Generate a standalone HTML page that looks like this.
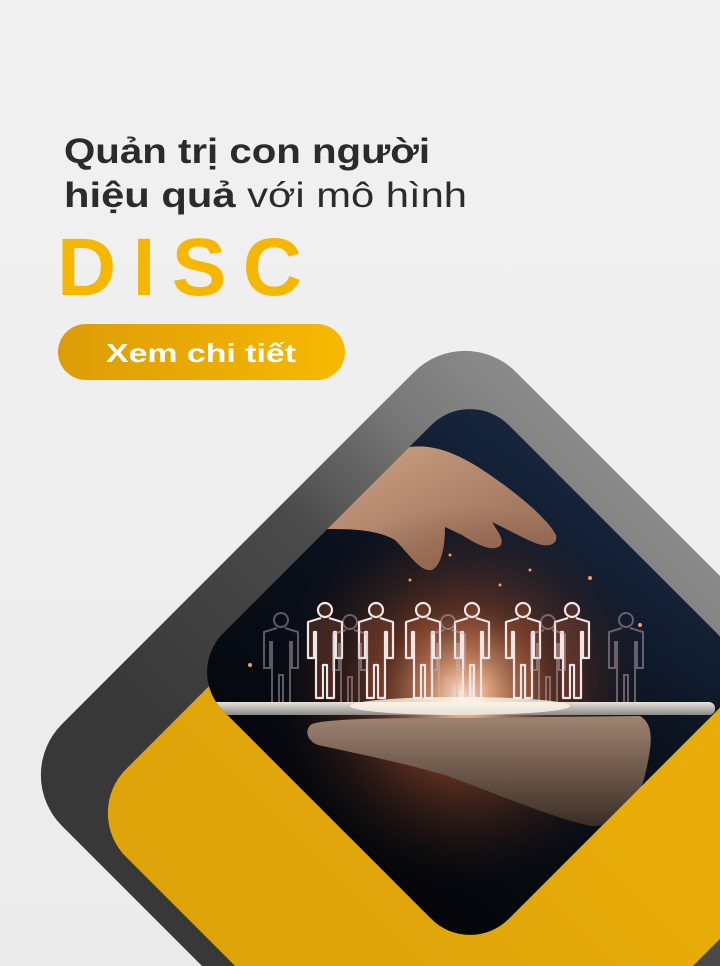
<!DOCTYPE html>
<html><head><meta charset="utf-8">
<style>
html,body{margin:0;padding:0;width:720px;height:966px;overflow:hidden;background:#efefef}
svg{display:block;overflow:hidden}
</style></head>
<body>
<svg width="720" height="966" viewBox="0 0 720 966" xmlns="http://www.w3.org/2000/svg">
<defs>
  <linearGradient id="bg" x1="0" y1="0" x2="0" y2="1">
    <stop offset="0" stop-color="#f1f1f1"/><stop offset="1" stop-color="#ebebeb"/>
  </linearGradient>
  <linearGradient id="gray" gradientUnits="userSpaceOnUse" x1="0" y1="340" x2="0" y2="966">
    <stop offset="0" stop-color="#9c9c9c"/><stop offset="0.35" stop-color="#7a7a7a"/><stop offset="0.6" stop-color="#4a4a4a"/><stop offset="1" stop-color="#383838"/>
  </linearGradient>
  <linearGradient id="yel" gradientUnits="userSpaceOnUse" x1="0" y1="700" x2="0" y2="966">
    <stop offset="0" stop-color="#e8ad08"/><stop offset="1" stop-color="#dea40a"/>
  </linearGradient>
  <linearGradient id="btn" x1="0" y1="0" x2="1" y2="0">
    <stop offset="0" stop-color="#dc9c08"/><stop offset="1" stop-color="#f7b900"/>
  </linearGradient>
  <linearGradient id="photo" gradientUnits="userSpaceOnUse" x1="600" y1="420" x2="300" y2="850">
    <stop offset="0" stop-color="#1a2c48"/><stop offset="0.45" stop-color="#0b121e"/><stop offset="1" stop-color="#030508"/>
  </linearGradient>
  <radialGradient id="glow" gradientUnits="userSpaceOnUse" cx="465" cy="695" r="190">
    <stop offset="0" stop-color="#fff4e8" stop-opacity="1"/>
    <stop offset="0.12" stop-color="#f6b58a" stop-opacity="0.9"/>
    <stop offset="0.45" stop-color="#b5532a" stop-opacity="0.45"/>
    <stop offset="1" stop-color="#3a1a10" stop-opacity="0"/>
  </radialGradient>
  <linearGradient id="skin" x1="0" y1="0" x2="1" y2="1">
    <stop offset="0" stop-color="#d2a687"/><stop offset="1" stop-color="#8e6550"/>
  </linearGradient>
  <linearGradient id="skin2" gradientUnits="userSpaceOnUse" x1="0" y1="715" x2="0" y2="825">
    <stop offset="0" stop-color="#a08472"/><stop offset="1" stop-color="#3c2e26"/>
  </linearGradient>
  <linearGradient id="tab" x1="0" y1="0" x2="0" y2="1">
    <stop offset="0" stop-color="#e8e2da"/><stop offset="1" stop-color="#8a8a88"/>
  </linearGradient>
  <clipPath id="pc"><rect x="268" y="470" width="404" height="404" rx="55" transform="rotate(45 470 672)"/></clipPath>
</defs>
<rect width="720" height="966" fill="url(#bg)"/>

<rect x="144" y="454" width="642" height="642" rx="72" transform="rotate(45 465 775)" fill="url(#gray)"/>
<rect x="194" y="543" width="540" height="540" rx="62" transform="rotate(45 464 813)" fill="url(#yel)"/>

<g clip-path="url(#pc)">
  <rect x="150" y="370" width="600" height="600" fill="url(#photo)"/>
  <path d="M300 505 C330 480 370 455 410 447 C440 443 470 460 500 482 C525 500 548 520 556 535 C558 545 548 548 535 543 C520 537 505 528 492 522 C498 532 505 540 500 546 C492 552 478 545 462 535 L445 527 C445 545 442 565 432 570 C420 572 410 555 395 540 C375 528 340 528 300 530 Z" fill="url(#skin)"/>
  <rect x="150" y="370" width="600" height="600" fill="url(#glow)"/>
  <g fill="#c0603a" fill-opacity="0.25" stroke="#f0e6e6" stroke-width="2.2" stroke-linejoin="round">
    <g id="m">
      <circle cx="0" cy="0" r="7"/>
      <path d="M-4 8 L-17 12 L-17 48 L-11 48 L-11 22 L-9 22 L-9 88 L-2 88 L-2 55 L2 55 L2 88 L9 88 L9 22 L11 22 L11 48 L17 48 L17 12 L4 8"/>
    </g>
    <use href="#m" x="325" y="610"/>
    <use href="#m" x="376" y="610"/>
    <use href="#m" x="423" y="610"/>
    <use href="#m" x="472" y="610"/>
    <use href="#m" x="523" y="610"/>
    <use href="#m" x="572" y="610"/>
  </g>
  <g fill="none" stroke="#c9b8c0" stroke-width="2" opacity="0.45">
    <use href="#m" x="281" y="620"/>
    <use href="#m" x="626" y="620"/>
    <use href="#m" x="350" y="622"/>
    <use href="#m" x="448" y="622"/>
    <use href="#m" x="548" y="622"/>
  </g>
  <g fill="#ff9a5a">
    <circle cx="240" cy="610" r="2"/><circle cx="250" cy="665" r="2"/><circle cx="640" cy="625" r="2"/>
    <circle cx="590" cy="578" r="2"/><circle cx="450" cy="555" r="1.5"/><circle cx="500" cy="585" r="1.5"/>
    <circle cx="410" cy="580" r="1.5"/><circle cx="660" cy="560" r="1.5"/><circle cx="530" cy="570" r="1.5"/>
  </g>
  <rect x="200" y="702" width="515" height="13" rx="6" fill="url(#tab)"/>
  <ellipse cx="460" cy="706" rx="110" ry="9" fill="#fff6ea" opacity="0.8"/>
  <path d="M312 724 C330 718 400 718 470 718 L640 716 C655 725 652 745 645 775 C638 805 615 828 590 826 C545 815 500 795 445 775 C400 762 350 752 318 745 C305 740 305 728 312 724 Z" fill="url(#skin2)"/>
</g>

<g font-family="'Liberation Sans', 'Noto Sans CJK SC', sans-serif" fill="#2b2b2b">
  <text x="64" y="163" font-size="35" font-weight="bold" textLength="366" lengthAdjust="spacingAndGlyphs">Quản trị con người</text>
  <text x="64" y="207" font-size="35" textLength="403" lengthAdjust="spacingAndGlyphs"><tspan font-weight="bold">hiệu quả</tspan> với mô hình</text>
  <text x="57" y="295" font-size="82" font-weight="bold" fill="#f5b700" textLength="245" lengthAdjust="spacing">DISC</text>
</g>
<rect x="58" y="324" width="287" height="56" rx="28" fill="url(#btn)"/>
<text x="201" y="362" font-family="'Liberation Sans', sans-serif" font-size="26" font-weight="bold" fill="#ffffff" text-anchor="middle" textLength="190" lengthAdjust="spacingAndGlyphs">Xem chi tiết</text>
</svg>
</body></html>
